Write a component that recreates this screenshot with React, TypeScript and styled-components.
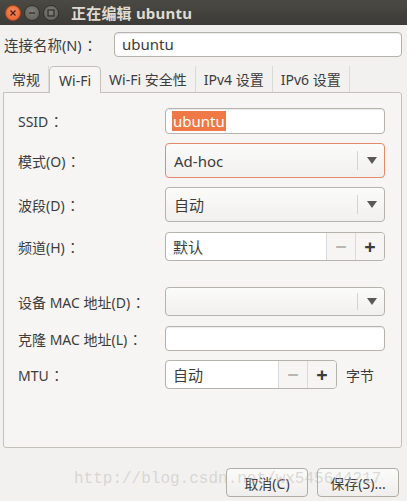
import React from "react";
import styled, { createGlobalStyle } from "styled-components";

const Global = createGlobalStyle`
  html, body { margin: 0; padding: 0; background: #f2f1f0; }
  body { font-family: "Noto Sans", "Noto Sans CJK SC", sans-serif; font-size: 14px; color: #3c3c3c; }
`;

const Window = styled.div`
  position: relative;
  width: 407px;
  height: 501px;
  background: #f2f1f0;
  display: flex;
  flex-direction: column;
  overflow: hidden;
`;

const TitleBar = styled.div`
  height: 25px;
  background: linear-gradient(#4a4944, #3c3b37);
  display: flex;
  align-items: center;
  padding-left: 5px;
  gap: 3px;
  box-sizing: border-box;
`;

const WinBtn = styled.div<{ $close?: boolean }>`
  width: 16px;
  height: 16px;
  border-radius: 50%;
  box-sizing: border-box;
  display: flex;
  align-items: center;
  justify-content: center;
  background: ${(p) =>
    p.$close
      ? "radial-gradient(circle at 50% 40%, #f58c5f, #e35b2a)"
      : "radial-gradient(circle at 50% 40%, #807e77, #5c5b56)"};
  border: 1px solid ${(p) => (p.$close ? "#b8431a" : "#34332f")};
`;

const TitleText = styled.div`
  margin-left: 9px;
  color: #dfdbd2;
  font-weight: bold;
  font-size: 15px;
  letter-spacing: 0.2px;
`;

const Colon = styled.span`
  font-family: "Noto Sans CJK JP", "Noto Sans CJK SC", sans-serif;
  margin-left: 1px;
`;

const Body = styled.div`
  flex: 1;
  display: flex;
  flex-direction: column;
  padding: 7px 5px 0 3px;
`;

const NameRow = styled.div`
  display: flex;
  align-items: center;
  height: 24px;
`;

const NameLabel = styled.div`
  width: 110px;
  padding-left: 1px;
  font-size: 14.5px;
`;

const Entry = styled.div<{ $h?: number }>`
  height: ${(p) => p.$h ?? 25}px;
  flex: 1;
  box-sizing: border-box;
  border: 1px solid #b6b3ad;
  border-radius: 4px;
  background: #fff;
  box-shadow: inset 0 1px 1px rgba(0, 0, 0, 0.08);
  display: flex;
  align-items: center;
  padding-left: 7px;
  font-size: 15px;
  color: #3c3c3c;
`;

const Tabs = styled.div`
  display: flex;
  margin-top: 10px;
  height: 26px;
  padding-left: 1px;
  align-items: flex-end;
`;

const Tab = styled.div<{ $active?: boolean }>`
  height: ${(p) => (p.$active ? 27 : 26)}px;
  box-sizing: border-box;
  padding: 0 ${(p) => (p.$active ? 9 : 8)}px;
  display: flex;
  align-items: center;
  font-size: 14px;
  color: #3c3c3c;
  background: ${(p) => (p.$active ? "#f6f5f4" : "transparent")};
  border: ${(p) => (p.$active ? "1px solid #c4c1bb" : "none")};
  border-bottom: none;
  border-right: ${(p) => (p.$active ? "1px solid #c4c1bb" : "1px solid #dcdad5")};
  border-radius: ${(p) => (p.$active ? "5px 5px 0 0" : "0")};
  margin-bottom: ${(p) => (p.$active ? "-1px" : "0")};
  position: relative;
  z-index: ${(p) => (p.$active ? 2 : 0)};
`;

const Panel = styled.div`
  height: 356px;
  box-sizing: border-box;
  border: 1px solid #c4c1bb;
  border-radius: 0 3px 3px 3px;
  background: #f6f5f4;
  padding: 15px 16px 0 14px;
  display: flex;
  flex-direction: column;
`;

const FormRow = styled.div<{ $mt?: number }>`
  display: flex;
  align-items: center;
  margin-top: ${(p) => p.$mt ?? 0}px;
`;

const Label = styled.div`
  width: 147px;
  font-size: 14px;
`;

const Selected = styled.span`
  background: #f07746;
  color: #fff;
  margin-left: -1px;
  padding: 0 1px;
`;

const Combo = styled.div<{ $h: number; $focus?: boolean }>`
  flex: 1;
  height: ${(p) => p.$h}px;
  box-sizing: border-box;
  border: 1px solid ${(p) => (p.$focus ? "#e4896a" : "#b6b3ad")};
  border-radius: 4px;
  background: linear-gradient(#fbfbfa, #f1f0ef);
  display: flex;
  align-items: center;
  font-size: 15px;
`;

const ComboText = styled.div`
  flex: 1;
  padding-left: 8px;
`;

const ComboArrow = styled.div`
  width: 26px;
  height: 60%;
  border-left: 1px solid #d6d4d0;
  display: flex;
  align-items: center;
  justify-content: center;
  &::after {
    content: "";
    border-left: 5.5px solid transparent;
    border-right: 5.5px solid transparent;
    border-top: 7px solid #5a5955;
    margin-left: 2px;
  }
`;

const Spin = styled.div<{ $w?: number }>`
  flex: ${(p) => (p.$w ? "none" : "1")};
  width: ${(p) => (p.$w ? `${p.$w}px` : "auto")};
  height: 29px;
  box-sizing: border-box;
  border: 1px solid #b6b3ad;
  border-radius: 4px;
  background: #fff;
  display: flex;
  align-items: stretch;
  overflow: hidden;
  font-size: 15px;
`;

const SpinText = styled.div`
  flex: 1;
  display: flex;
  align-items: center;
  padding-left: 7px;
`;

const SpinBtn = styled.div<{ $dim?: boolean }>`
  width: 28px;
  border-left: 1px solid #dcdad6;
  background: #f6f5f4;
  display: flex;
  align-items: center;
  justify-content: center;
  font-size: 20px;
  font-weight: bold;
  color: ${(p) => (p.$dim ? "#b8b6b2" : "#3c3c3c")};
  line-height: 1;
`;

const Unit = styled.div`
  margin-left: 9px;
  font-size: 14px;
`;

const Footer = styled.div`
  display: flex;
  justify-content: flex-end;
  gap: 9px;
  margin-top: 20px;
  padding-right: 3px;
`;

const Button = styled.div`
  width: 82px;
  height: 29px;
  box-sizing: border-box;
  border: 1px solid #b0ada7;
  border-radius: 4px;
  background: linear-gradient(#fbfbfa, #efeeec);
  display: flex;
  align-items: center;
  justify-content: center;
  font-size: 14px;
  color: #3c3c3c;
`;

const Watermark = styled.div`
  position: absolute;
  left: 74px;
  top: 470px;
  font-family: "Liberation Mono", monospace;
  font-size: 16px;
  color: rgba(190, 186, 180, 0.5);
  pointer-events: none;
  white-space: nowrap;
`;

export default function App() {
  return (
    <Window>
      <Global />
      <TitleBar>
        <WinBtn $close>
          <svg width="8" height="8" viewBox="0 0 8 8">
            <path d="M1.5 1.5L6.5 6.5M6.5 1.5L1.5 6.5" stroke="#4a2010" strokeWidth="1.3" />
          </svg>
        </WinBtn>
        <WinBtn>
          <svg width="8" height="8" viewBox="0 0 8 8">
            <path d="M1 4H7" stroke="#2e2d2a" strokeWidth="1.3" />
          </svg>
        </WinBtn>
        <WinBtn>
          <svg width="8" height="8" viewBox="0 0 8 8">
            <rect x="1" y="1" width="6" height="6" fill="none" stroke="#2e2d2a" strokeWidth="1.2" />
          </svg>
        </WinBtn>
        <TitleText>正在编辑 ubuntu</TitleText>
      </TitleBar>
      <Body>
        <NameRow>
          <NameLabel>
            连接名称(N)<Colon>：</Colon>
          </NameLabel>
          <Entry $h={25}>ubuntu</Entry>
        </NameRow>
        <Tabs>
          <Tab>常规</Tab>
          <Tab $active>Wi-Fi</Tab>
          <Tab>Wi-Fi 安全性</Tab>
          <Tab>IPv4 设置</Tab>
          <Tab>IPv6 设置</Tab>
        </Tabs>
        <Panel>
          <FormRow>
            <Label>
              SSID<Colon>：</Colon>
            </Label>
            <Entry $h={26}>
              <Selected>ubuntu</Selected>
            </Entry>
          </FormRow>
          <FormRow $mt={9}>
            <Label>
              模式(O)<Colon>：</Colon>
            </Label>
            <Combo $h={35} $focus>
              <ComboText>Ad-hoc</ComboText>
              <ComboArrow />
            </Combo>
          </FormRow>
          <FormRow $mt={9}>
            <Label>
              波段(D)<Colon>：</Colon>
            </Label>
            <Combo $h={35}>
              <ComboText>自动</ComboText>
              <ComboArrow />
            </Combo>
          </FormRow>
          <FormRow $mt={10}>
            <Label>
              频道(H)<Colon>：</Colon>
            </Label>
            <Spin>
              <SpinText>默认</SpinText>
              <SpinBtn $dim>−</SpinBtn>
              <SpinBtn>+</SpinBtn>
            </Spin>
          </FormRow>
          <FormRow $mt={26}>
            <Label>
              设备 MAC 地址(D)<Colon>：</Colon>
            </Label>
            <Combo $h={29}>
              <ComboText />
              <ComboArrow />
            </Combo>
          </FormRow>
          <FormRow $mt={10}>
            <Label>
              克隆 MAC 地址(L)<Colon>：</Colon>
            </Label>
            <Entry $h={25} />
          </FormRow>
          <FormRow $mt={9}>
            <Label>
              MTU<Colon>：</Colon>
            </Label>
            <Spin $w={172}>
              <SpinText>自动</SpinText>
              <SpinBtn $dim>−</SpinBtn>
              <SpinBtn>+</SpinBtn>
            </Spin>
            <Unit>字节</Unit>
          </FormRow>
        </Panel>
        <Footer>
          <Button>取消(C)</Button>
          <Button>保存(S)...</Button>
        </Footer>
      </Body>
      <Watermark>http://blog.csdn.net/wx545644217</Watermark>
    </Window>
  );
}
